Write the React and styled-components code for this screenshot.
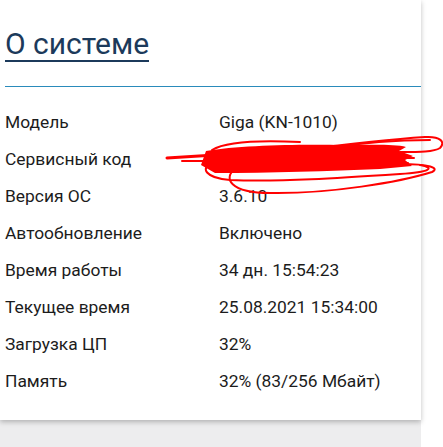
import React from "react";
import styled, { createGlobalStyle } from "styled-components";

const GlobalStyle = createGlobalStyle`
  body {
    margin: 0;
    background: #ffffff;
    font-family: Roboto, "Noto Sans", sans-serif;
  }
`;

const rows = [
  ["Модель", "Giga (KN-1010)"],
  ["Сервисный код", ""],
  ["Версия ОС", "3.6.10"],
  ["Автообновление", "Включено"],
  ["Время работы", "34 дн. 15:54:23"],
  ["Текущее время", "25.08.2021 15:34:00"],
  ["Загрузка ЦП", "32%"],
  ["Память", "32% (83/256 Мбайт)"],
];

export default function App() {
  return (
    <>
      <GlobalStyle />
      <Page>
        <Card>
          <Header>
            <Title>О системе</Title>
          </Header>
          <Divider />
          <InfoList>
            {rows.map(([label, value]) => (
              <Row key={label}>
                <Label>{label}</Label>
                <Value>{value}</Value>
              </Row>
            ))}
          </InfoList>
          {/* hand-drawn red mark hiding the service code */}
          <Scribble viewBox="160 130 285 70" fill="none">
            <path
              d="M206 151 C 240 145, 300 144, 345 145 C 370 145, 395 144, 406 147 L 399 151 L 413 156 L 405 160 L 412 166 L 380 169 C 330 171, 270 173, 215 173 L 201 165 Z"
              fill="#ff0000"
            />
            <g stroke="#ff0000" strokeWidth="2" strokeLinecap="round">
              <path d="M167 158 L 215 155" strokeWidth="3" />
              <path d="M182 161 L 215 161" />
              <path d="M212 150 C 225 142, 260 140, 300 142" />
              <path d="M300 150 C 340 145, 380 140, 425 137 C 440 136, 446 142, 440 148 C 434 152, 420 152, 400 152" />
              <path d="M330 148 C 360 143, 395 140, 430 140" />
              <path d="M212 162 C 200 168, 205 178, 230 180 C 280 182, 340 178, 400 174 C 430 172, 436 168, 420 165" />
              <path d="M236 168 C 222 178, 230 193, 270 193 C 330 194, 400 182, 432 172 C 440 168, 430 164, 400 164" />
              <path d="M360 158 L 414 158" />
              <path d="M350 163 L 408 163" />
            </g>
          </Scribble>
        </Card>
        <Footer />
      </Page>
    </>
  );
}

const Page = styled.div`
  width: 421px;
  display: flex;
  flex-direction: column;
`;

const Card = styled.section`
  position: relative;
  background: #ffffff;
  padding: 0 0 20px;
  box-shadow: 0 2px 5px rgba(0, 0, 0, 0.25);
  z-index: 1;
`;

const Header = styled.div`
  padding: 28px 5px 0;
`;

const Title = styled.h1`
  display: inline-block;
  margin: 0;
  font-size: 30px;
  font-weight: 400;
  line-height: 32px;
  color: #1c3a5b;
  border-bottom: 2px solid #1c3a5b;
`;

const Divider = styled.hr`
  margin: 24px 0 0 5px;
  border: 0;
  height: 1px;
  background: #2a8bbb;
`;

const InfoList = styled.dl`
  margin: 17px 0 0;
  padding: 0 5px;
  display: flex;
  flex-direction: column;
`;

const Row = styled.div`
  display: grid;
  grid-template-columns: 214px 1fr;
  font-size: 17.4px;
  line-height: 37px;
  color: #1c1c1c;
`;

const Label = styled.dt`
  margin: 0;
`;

const Value = styled.dd`
  margin: 0;
`;

const Scribble = styled.svg`
  position: absolute;
  left: 160px;
  top: 130px;
  width: 285px;
  height: 70px;
  overflow: visible;
`;

const Footer = styled.div`
  height: 40px;
  background: #ededee;
`;
